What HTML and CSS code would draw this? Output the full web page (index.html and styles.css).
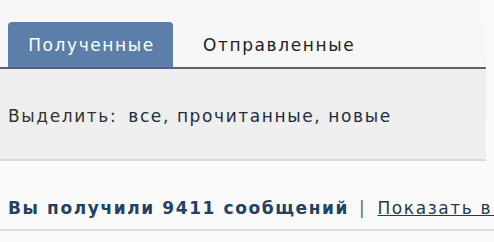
FILE: index.html
```html
<!DOCTYPE html>
<html lang="ru">
<head>
<meta charset="utf-8">
<link rel="stylesheet" href="styles.css">
</head>
<body>
<div class="page">
  <div class="tabs">
    <div class="tab active">Полученные</div>
    <div class="tab">Отправленные</div>
  </div>
  <div class="filter">
    <span class="label">Выделить:</span>
    <span class="links">все, прочитанные, новые</span>
  </div>
  <div class="summary">
    <span class="count">Вы получили 9411 сообщений</span>
    <span class="sep">|</span>
    <span class="show">Показать в виде диалогов</span>
  </div>
</div>
</body>
</html>
```
FILE: styles.css
```css
html, body {
  margin: 0;
  padding: 0;
  background: #fafafa;
  overflow: hidden;
}
body {
  font-family: "DejaVu Sans", Verdana, sans-serif;
  font-size: 17px;
  letter-spacing: 1.6px;
  width: 494px;
  height: 242px;
}
.page {
  width: 486px;
  padding-top: 22px;
  background: linear-gradient(#f8f8f8, #f6f6f6);
}
.tabs {
  display: flex;
  align-items: flex-end;
  height: 45px;
  border-bottom: 2px solid #5a626d;
  padding-left: 8px;
}
.tab {
  height: 45px;
  display: flex;
  align-items: center;
  padding: 0 30px;
  color: #222;
  white-space: nowrap;
}
.tab.active {
  width: 165px;
  box-sizing: border-box;
  justify-content: center;
  padding: 0 0 0 2px;
  background: #5b7fa8;
  color: #fff;
  border-radius: 4px 4px 0 0;
}
.filter {
  height: 92px;
  background: linear-gradient(#eeeeee, #efefef);
  border-bottom: 2px solid #dadada;
  display: flex;
  align-items: center;
  padding-left: 8px;
  white-space: nowrap;
  color: #333;
  box-sizing: border-box;
  padding-top: 4px;
}
.links {
  margin-left: 11px;
  color: #1e2d3d;
}
.summary {
  height: 70px;
  border-bottom: 2px solid #dedede;
  background: #fafafa;
  display: flex;
  align-items: center;
  padding-left: 8px;
  padding-top: 26px;
  box-sizing: border-box;
  white-space: nowrap;
  width: 494px;
  overflow: hidden;
}
.count {
  font-weight: bold;
  color: #24415f;
}
.sep {
  color: #666;
  margin: 0 11px 0 10px;
}
.show {
  color: #253a50;
  text-decoration: underline;
}
```
